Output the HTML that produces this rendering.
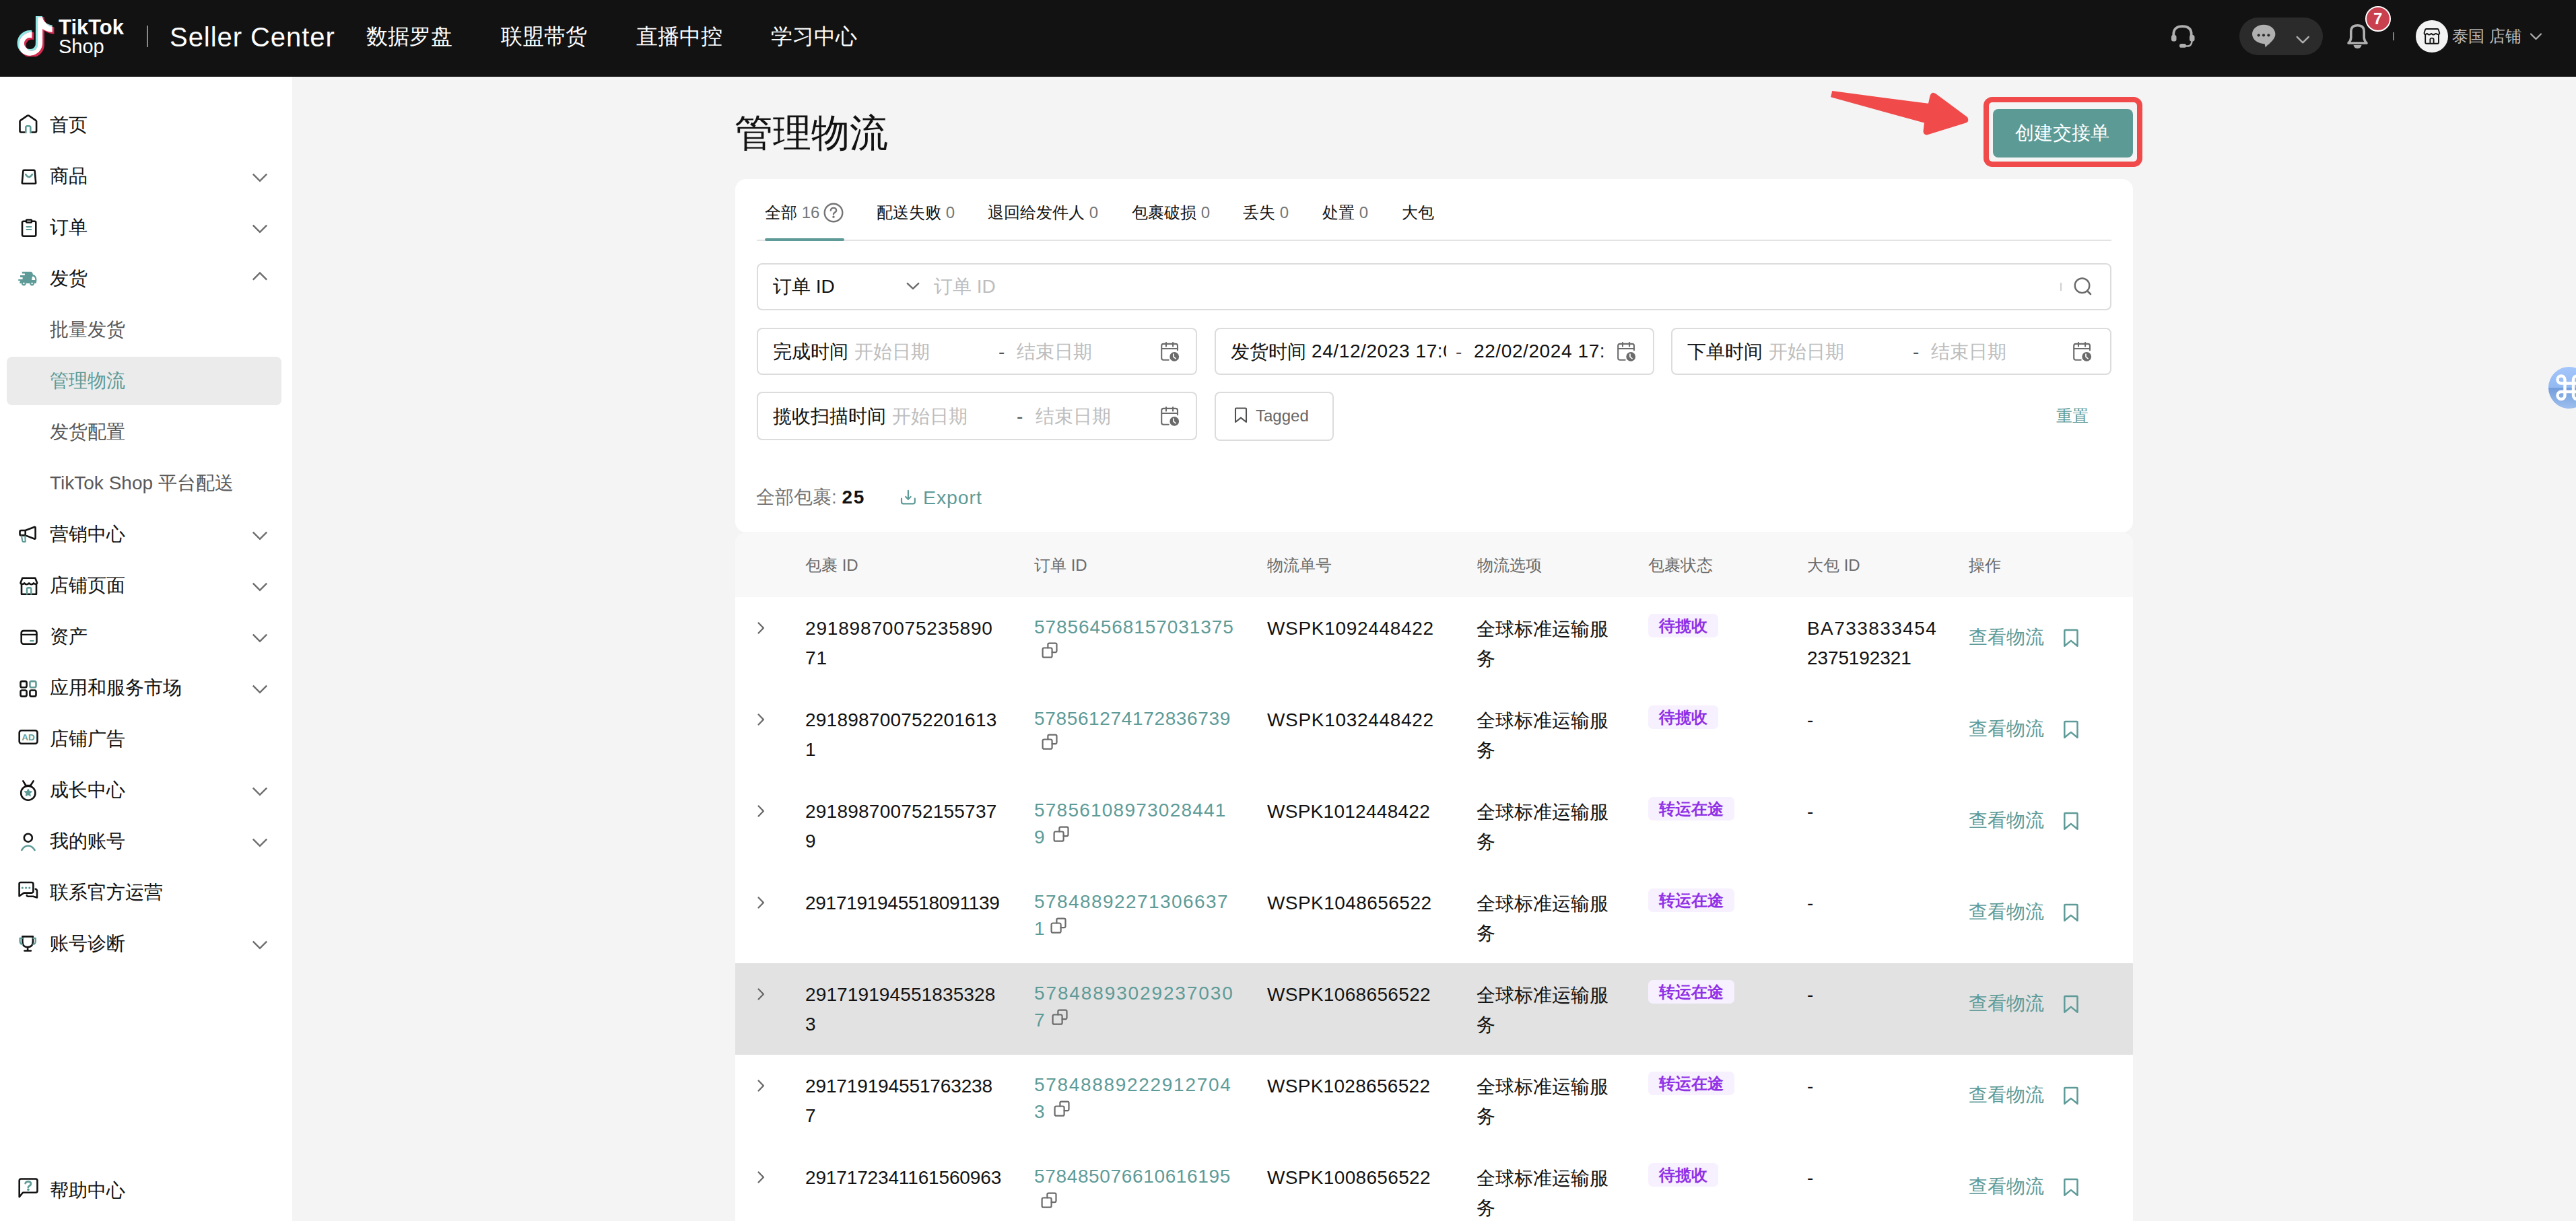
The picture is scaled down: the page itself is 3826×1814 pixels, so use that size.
<!DOCTYPE html>
<html><head><meta charset="utf-8"><style>
html,body{margin:0;padding:0;width:3826px;height:1814px;overflow:hidden;background:#f4f4f4;font-family:"Liberation Sans",sans-serif}
.t{position:absolute;white-space:nowrap}
.r{position:absolute}
</style></head><body>
<div class="r" style="left:0px;top:0px;width:3826px;height:114px;background:#121212"></div>
<div class="r" style="left:0px;top:114px;width:434px;height:1700px;background:#fff"></div>
<div class="t" style="left:87px;top:15.5px;font-size:31px;line-height:50px;color:#fff;font-weight:700;">TikTok</div>
<div class="t" style="left:87px;top:45.5px;font-size:29px;line-height:46px;color:#fff;font-weight:400;">Shop</div>
<div class="r" style="left:218px;top:38px;width:2px;height:32px;background:#8a8a8a"></div>
<div class="t" style="left:252px;top:23.0px;font-size:40px;line-height:64px;color:#fff;font-weight:400;letter-spacing:0.95px">Seller Center</div>
<div class="t" style="left:544px;top:28.0px;font-size:32.3px;line-height:52px;color:#fff;font-weight:400;">数据罗盘</div>
<div class="t" style="left:744px;top:28.0px;font-size:32.3px;line-height:52px;color:#fff;font-weight:400;">联盟带货</div>
<div class="t" style="left:945px;top:28.0px;font-size:32.3px;line-height:52px;color:#fff;font-weight:400;">直播中控</div>
<div class="t" style="left:1145px;top:28.0px;font-size:32.3px;line-height:52px;color:#fff;font-weight:400;">学习中心</div>
<div class="r" style="left:3326px;top:26px;width:124px;height:56px;background:#2b2b2b;border-radius:28px"></div>
<div class="r" style="left:3513px;top:9px;width:38px;height:38px;background:#c9404f;border:2px solid #fff;border-radius:50%;box-sizing:border-box"></div>
<div class="t" style="left:3525px;top:9.0px;font-size:24px;line-height:38px;color:#fff;font-weight:700;">7</div>
<div class="r" style="left:3554px;top:48px;width:2px;height:12px;background:#7b7f95"></div>
<div class="r" style="left:3588px;top:30px;width:48px;height:48px;background:#f2f2f2;border-radius:50%"></div>
<div class="t" style="left:3642px;top:35.0px;font-size:24px;line-height:38px;color:#bdbdbd;font-weight:400;">泰国 店铺</div>
<div class="r" style="left:10px;top:530px;width:408px;height:72px;background:#ebebeb;border-radius:8px"></div>
<div class="t" style="left:74px;top:162.7px;font-size:28px;line-height:45px;color:#121212;font-weight:400;">首页</div>
<div class="t" style="left:74px;top:238.7px;font-size:28px;line-height:45px;color:#121212;font-weight:400;">商品</div>
<div class="t" style="left:74px;top:314.7px;font-size:28px;line-height:45px;color:#121212;font-weight:400;">订单</div>
<div class="t" style="left:74px;top:390.7px;font-size:28px;line-height:45px;color:#121212;font-weight:400;">发货</div>
<div class="t" style="left:74px;top:466.7px;font-size:28px;line-height:45px;color:#595959;font-weight:400;">批量发货</div>
<div class="t" style="left:74px;top:542.7px;font-size:28px;line-height:45px;color:#5e9b98;font-weight:400;">管理物流</div>
<div class="t" style="left:74px;top:618.7px;font-size:28px;line-height:45px;color:#595959;font-weight:400;">发货配置</div>
<div class="t" style="left:74px;top:694.7px;font-size:28px;line-height:45px;color:#595959;font-weight:400;">TikTok Shop 平台配送</div>
<div class="t" style="left:74px;top:770.7px;font-size:28px;line-height:45px;color:#121212;font-weight:400;">营销中心</div>
<div class="t" style="left:74px;top:846.7px;font-size:28px;line-height:45px;color:#121212;font-weight:400;">店铺页面</div>
<div class="t" style="left:74px;top:922.7px;font-size:28px;line-height:45px;color:#121212;font-weight:400;">资产</div>
<div class="t" style="left:74px;top:998.7px;font-size:28px;line-height:45px;color:#121212;font-weight:400;">应用和服务市场</div>
<div class="t" style="left:74px;top:1074.7px;font-size:28px;line-height:45px;color:#121212;font-weight:400;">店铺广告</div>
<div class="t" style="left:74px;top:1150.7px;font-size:28px;line-height:45px;color:#121212;font-weight:400;">成长中心</div>
<div class="t" style="left:74px;top:1226.7px;font-size:28px;line-height:45px;color:#121212;font-weight:400;">我的账号</div>
<div class="t" style="left:74px;top:1302.7px;font-size:28px;line-height:45px;color:#121212;font-weight:400;">联系官方运营</div>
<div class="t" style="left:74px;top:1378.7px;font-size:28px;line-height:45px;color:#121212;font-weight:400;">账号诊断</div>
<div class="t" style="left:74px;top:1745.7px;font-size:28px;line-height:45px;color:#121212;font-weight:400;">帮助中心</div>
<div class="t" style="left:1091px;top:152.0px;font-size:57px;line-height:91px;color:#121212;font-weight:400;">管理物流</div>
<div class="r" style="left:1092px;top:266px;width:2076px;height:525px;background:#fff;border-radius:16px"></div>
<div class="t" style="left:1136px;top:296.6px;font-size:24px;line-height:38px;color:#121212;font-weight:400;">全部<span style="color:#757575"> 16</span></div>
<div class="t" style="left:1302px;top:296.6px;font-size:24px;line-height:38px;color:#121212;font-weight:400;">配送失败<span style="color:#757575"> 0</span></div>
<div class="t" style="left:1467px;top:296.6px;font-size:24px;line-height:38px;color:#121212;font-weight:400;">退回给发件人<span style="color:#757575"> 0</span></div>
<div class="t" style="left:1681px;top:296.6px;font-size:24px;line-height:38px;color:#121212;font-weight:400;">包裹破损<span style="color:#757575"> 0</span></div>
<div class="t" style="left:1846px;top:296.6px;font-size:24px;line-height:38px;color:#121212;font-weight:400;">丢失<span style="color:#757575"> 0</span></div>
<div class="t" style="left:1964px;top:296.6px;font-size:24px;line-height:38px;color:#121212;font-weight:400;">处置<span style="color:#757575"> 0</span></div>
<div class="t" style="left:2082px;top:296.6px;font-size:24px;line-height:38px;color:#121212;font-weight:400;">大包</div>
<div class="r" style="left:1124px;top:356px;width:2012px;height:2px;background:#e3e3e3"></div>
<div class="r" style="left:1136px;top:354px;width:118px;height:4px;background:#5e9b98;border-radius:2px"></div>
<div class="r" style="left:1124px;top:391px;width:2012px;height:70px;border:2px solid #dcdcdc;border-radius:8px;box-sizing:border-box"></div>
<div class="t" style="left:1148px;top:402.5px;font-size:28px;line-height:45px;color:#121212;font-weight:400;">订单 ID</div>
<div class="t" style="left:1387px;top:402.5px;font-size:28px;line-height:45px;color:#bdbdbd;font-weight:400;">订单 ID</div>
<div class="r" style="left:3060px;top:420px;width:2px;height:12px;background:#cfcfcf"></div>
<div class="r" style="left:1124px;top:487px;width:654px;height:70px;border:2px solid #dcdcdc;border-radius:8px;box-sizing:border-box"></div>
<div class="r" style="left:1804px;top:487px;width:653px;height:70px;border:2px solid #dcdcdc;border-radius:8px;box-sizing:border-box"></div>
<div class="r" style="left:2482px;top:487px;width:654px;height:70px;border:2px solid #dcdcdc;border-radius:8px;box-sizing:border-box"></div>
<div class="r" style="left:1124px;top:582px;width:654px;height:72px;border:2px solid #dcdcdc;border-radius:8px;box-sizing:border-box"></div>
<div class="r" style="left:1804px;top:582px;width:177px;height:73px;border:2px solid #dcdcdc;border-radius:8px;box-sizing:border-box"></div>
<div class="t" style="left:1148px;top:499.5px;font-size:28px;line-height:45px;color:#121212;font-weight:400;">完成时间</div>
<div class="t" style="left:1269px;top:499.5px;font-size:28px;line-height:45px;color:#bdbdbd;font-weight:400;">开始日期</div>
<div class="t" style="left:1483px;top:499.5px;font-size:28px;line-height:45px;color:#555;font-weight:400;">-</div>
<div class="t" style="left:1510px;top:499.5px;font-size:28px;line-height:45px;color:#bdbdbd;font-weight:400;">结束日期</div>
<div class="t" style="left:1828px;top:499.5px;font-size:28px;line-height:45px;color:#121212;font-weight:400;">发货时间</div>
<div class="t" style="left:1948px;top:500px;width:200px;overflow:hidden;font-size:28px;line-height:44px;color:#121212;letter-spacing:0.6px">24/12/2023 17:00</div>
<div class="t" style="left:2162px;top:499.5px;font-size:28px;line-height:45px;color:#555;font-weight:400;">-</div>
<div class="t" style="left:2189px;top:500px;width:196px;overflow:hidden;font-size:28px;line-height:44px;color:#121212;letter-spacing:0.6px">22/02/2024 17:00</div>
<div class="t" style="left:2506px;top:499.5px;font-size:28px;line-height:45px;color:#121212;font-weight:400;">下单时间</div>
<div class="t" style="left:2627px;top:499.5px;font-size:28px;line-height:45px;color:#bdbdbd;font-weight:400;">开始日期</div>
<div class="t" style="left:2841px;top:499.5px;font-size:28px;line-height:45px;color:#555;font-weight:400;">-</div>
<div class="t" style="left:2868px;top:499.5px;font-size:28px;line-height:45px;color:#bdbdbd;font-weight:400;">结束日期</div>
<div class="t" style="left:1148px;top:595.5px;font-size:28px;line-height:45px;color:#121212;font-weight:400;">揽收扫描时间</div>
<div class="t" style="left:1325px;top:595.5px;font-size:28px;line-height:45px;color:#bdbdbd;font-weight:400;">开始日期</div>
<div class="t" style="left:1510px;top:595.5px;font-size:28px;line-height:45px;color:#555;font-weight:400;">-</div>
<div class="t" style="left:1538px;top:595.5px;font-size:28px;line-height:45px;color:#bdbdbd;font-weight:400;">结束日期</div>
<div class="t" style="left:1865px;top:599.0px;font-size:24px;line-height:38px;color:#666;font-weight:400;">Tagged</div>
<div class="t" style="left:3054px;top:598.5px;font-size:24px;line-height:38px;color:#5e9b98;font-weight:400;">重置</div>
<div class="t" style="left:1123px;top:716.0px;font-size:28px;line-height:45px;color:#757575;font-weight:400;">全部包裹: <b style="color:#121212;letter-spacing:1.5px">25</b></div>
<div class="t" style="left:1371px;top:716.0px;font-size:28.5px;line-height:46px;color:#5e9b98;font-weight:500;letter-spacing:0.9px">Export</div>
<div class="r" style="left:1092px;top:792px;width:2076px;height:95px;background:#f8f8f8;border-radius:14px 14px 0 0"></div>
<div class="t" style="left:1196px;top:821.0px;font-size:24px;line-height:38px;color:#6b6b6b;font-weight:400;">包裹 ID</div>
<div class="t" style="left:1536px;top:821.0px;font-size:24px;line-height:38px;color:#6b6b6b;font-weight:400;">订单 ID</div>
<div class="t" style="left:1882px;top:821.0px;font-size:24px;line-height:38px;color:#6b6b6b;font-weight:400;">物流单号</div>
<div class="t" style="left:2194px;top:821.0px;font-size:24px;line-height:38px;color:#6b6b6b;font-weight:400;">物流选项</div>
<div class="t" style="left:2448px;top:821.0px;font-size:24px;line-height:38px;color:#6b6b6b;font-weight:400;">包裹状态</div>
<div class="t" style="left:2684px;top:821.0px;font-size:24px;line-height:38px;color:#6b6b6b;font-weight:400;">大包 ID</div>
<div class="t" style="left:2924px;top:821.0px;font-size:24px;line-height:38px;color:#6b6b6b;font-weight:400;">操作</div>
<div class="r" style="left:1092px;top:887px;width:2076px;height:136px;background:#fff"></div>
<div class="t" style="left:1196px;top:911.0px;font-size:28px;line-height:45px;color:#121212;font-weight:400;letter-spacing:0.825px">29189870075235890</div>
<div class="t" style="left:1196px;top:955.0px;font-size:28px;line-height:45px;color:#121212;font-weight:400;letter-spacing:0.825px">71</div>
<div class="t" style="left:1536px;top:909.0px;font-size:28px;line-height:45px;color:#5e9b98;font-weight:500;letter-spacing:0.906px">578564568157031375</div>
<div class="t" style="left:1882px;top:911.0px;font-size:28px;line-height:45px;color:#121212;font-weight:400;letter-spacing:0.677px">WSPK1092448422</div>
<div class="t" style="left:2193px;top:911.5px;font-size:28px;line-height:45px;color:#121212;font-weight:400;">全球标准运输服</div>
<div class="t" style="left:2193px;top:955.5px;font-size:28px;line-height:45px;color:#121212;font-weight:400;">务</div>
<div class="r" style="left:2448px;top:912px;width:104px;height:35px;background:#f7f0fe;border-radius:7px"></div>
<div class="t" style="left:2464px;top:910.5px;font-size:24px;line-height:38px;color:#9030e6;font-weight:700;">待揽收</div>
<div class="t" style="left:2684px;top:911.0px;font-size:28px;line-height:45px;color:#121212;font-weight:400;letter-spacing:1.440px">BA733833454</div>
<div class="t" style="left:2684px;top:955.0px;font-size:28px;line-height:45px;color:#121212;font-weight:400;letter-spacing:-0.111px">2375192321</div>
<div class="t" style="left:2924px;top:923.5px;font-size:28px;line-height:45px;color:#5e9b98;font-weight:400;">查看物流</div>
<div class="r" style="left:1092px;top:1023px;width:2076px;height:136px;background:#fff"></div>
<div class="t" style="left:1196px;top:1047.0px;font-size:28px;line-height:45px;color:#121212;font-weight:400;letter-spacing:0.235px">291898700752201613</div>
<div class="t" style="left:1196px;top:1091.0px;font-size:28px;line-height:45px;color:#121212;font-weight:400;letter-spacing:0.235px">1</div>
<div class="t" style="left:1536px;top:1045.0px;font-size:28px;line-height:45px;color:#5e9b98;font-weight:500;letter-spacing:0.647px">578561274172836739</div>
<div class="t" style="left:1882px;top:1047.0px;font-size:28px;line-height:45px;color:#121212;font-weight:400;letter-spacing:0.677px">WSPK1032448422</div>
<div class="t" style="left:2193px;top:1047.5px;font-size:28px;line-height:45px;color:#121212;font-weight:400;">全球标准运输服</div>
<div class="t" style="left:2193px;top:1091.5px;font-size:28px;line-height:45px;color:#121212;font-weight:400;">务</div>
<div class="r" style="left:2448px;top:1048px;width:104px;height:35px;background:#f7f0fe;border-radius:7px"></div>
<div class="t" style="left:2464px;top:1046.5px;font-size:24px;line-height:38px;color:#9030e6;font-weight:700;">待揽收</div>
<div class="t" style="left:2684px;top:1047.0px;font-size:28px;line-height:45px;color:#121212;font-weight:400;letter-spacing:0.700px">-</div>
<div class="t" style="left:2924px;top:1059.5px;font-size:28px;line-height:45px;color:#5e9b98;font-weight:400;">查看物流</div>
<div class="r" style="left:1092px;top:1159px;width:2076px;height:136px;background:#fff"></div>
<div class="t" style="left:1196px;top:1183.0px;font-size:28px;line-height:45px;color:#121212;font-weight:400;letter-spacing:0.235px">291898700752155737</div>
<div class="t" style="left:1196px;top:1227.0px;font-size:28px;line-height:45px;color:#121212;font-weight:400;letter-spacing:0.235px">9</div>
<div class="t" style="left:1536px;top:1181.0px;font-size:28px;line-height:45px;color:#5e9b98;font-weight:500;letter-spacing:1.231px">57856108973028441</div>
<div class="t" style="left:1536px;top:1221.0px;font-size:28px;line-height:45px;color:#5e9b98;font-weight:500;letter-spacing:1.231px">9</div>
<div class="t" style="left:1882px;top:1183.0px;font-size:28px;line-height:45px;color:#121212;font-weight:400;letter-spacing:0.277px">WSPK1012448422</div>
<div class="t" style="left:2193px;top:1183.5px;font-size:28px;line-height:45px;color:#121212;font-weight:400;">全球标准运输服</div>
<div class="t" style="left:2193px;top:1227.5px;font-size:28px;line-height:45px;color:#121212;font-weight:400;">务</div>
<div class="r" style="left:2448px;top:1184px;width:128px;height:35px;background:#f7f0fe;border-radius:7px"></div>
<div class="t" style="left:2464px;top:1182.5px;font-size:24px;line-height:38px;color:#9030e6;font-weight:700;">转运在途</div>
<div class="t" style="left:2684px;top:1183.0px;font-size:28px;line-height:45px;color:#121212;font-weight:400;letter-spacing:0.700px">-</div>
<div class="t" style="left:2924px;top:1195.5px;font-size:28px;line-height:45px;color:#5e9b98;font-weight:400;">查看物流</div>
<div class="r" style="left:1092px;top:1295px;width:2076px;height:136px;background:#fff"></div>
<div class="t" style="left:1196px;top:1319.0px;font-size:28px;line-height:45px;color:#121212;font-weight:400;letter-spacing:-0.278px">2917191945518091139</div>
<div class="t" style="left:1536px;top:1317.0px;font-size:28px;line-height:45px;color:#5e9b98;font-weight:500;letter-spacing:1.425px">57848892271306637</div>
<div class="t" style="left:1536px;top:1357.0px;font-size:28px;line-height:45px;color:#5e9b98;font-weight:500;letter-spacing:1.425px">1</div>
<div class="t" style="left:1882px;top:1319.0px;font-size:28px;line-height:45px;color:#121212;font-weight:400;letter-spacing:0.446px">WSPK1048656522</div>
<div class="t" style="left:2193px;top:1319.5px;font-size:28px;line-height:45px;color:#121212;font-weight:400;">全球标准运输服</div>
<div class="t" style="left:2193px;top:1363.5px;font-size:28px;line-height:45px;color:#121212;font-weight:400;">务</div>
<div class="r" style="left:2448px;top:1320px;width:128px;height:35px;background:#f7f0fe;border-radius:7px"></div>
<div class="t" style="left:2464px;top:1318.5px;font-size:24px;line-height:38px;color:#9030e6;font-weight:700;">转运在途</div>
<div class="t" style="left:2684px;top:1319.0px;font-size:28px;line-height:45px;color:#121212;font-weight:400;letter-spacing:0.700px">-</div>
<div class="t" style="left:2924px;top:1331.5px;font-size:28px;line-height:45px;color:#5e9b98;font-weight:400;">查看物流</div>
<div class="r" style="left:1092px;top:1431px;width:2076px;height:136px;background:#e2e2e2"></div>
<div class="t" style="left:1196px;top:1455.0px;font-size:28px;line-height:45px;color:#121212;font-weight:400;letter-spacing:0.118px">291719194551835328</div>
<div class="t" style="left:1196px;top:1499.0px;font-size:28px;line-height:45px;color:#121212;font-weight:400;letter-spacing:0.118px">3</div>
<div class="t" style="left:1536px;top:1453.0px;font-size:28px;line-height:45px;color:#5e9b98;font-weight:500;letter-spacing:1.875px">57848893029237030</div>
<div class="t" style="left:1536px;top:1493.0px;font-size:28px;line-height:45px;color:#5e9b98;font-weight:500;letter-spacing:1.875px">7</div>
<div class="t" style="left:1882px;top:1455.0px;font-size:28px;line-height:45px;color:#121212;font-weight:400;letter-spacing:0.346px">WSPK1068656522</div>
<div class="t" style="left:2193px;top:1455.5px;font-size:28px;line-height:45px;color:#121212;font-weight:400;">全球标准运输服</div>
<div class="t" style="left:2193px;top:1499.5px;font-size:28px;line-height:45px;color:#121212;font-weight:400;">务</div>
<div class="r" style="left:2448px;top:1456px;width:128px;height:35px;background:#f7f0fe;border-radius:7px"></div>
<div class="t" style="left:2464px;top:1454.5px;font-size:24px;line-height:38px;color:#9030e6;font-weight:700;">转运在途</div>
<div class="t" style="left:2684px;top:1455.0px;font-size:28px;line-height:45px;color:#121212;font-weight:400;letter-spacing:0.700px">-</div>
<div class="t" style="left:2924px;top:1467.5px;font-size:28px;line-height:45px;color:#5e9b98;font-weight:400;">查看物流</div>
<div class="r" style="left:1092px;top:1567px;width:2076px;height:136px;background:#fff"></div>
<div class="t" style="left:1196px;top:1591.0px;font-size:28px;line-height:45px;color:#121212;font-weight:400;letter-spacing:-0.129px">291719194551763238</div>
<div class="t" style="left:1196px;top:1635.0px;font-size:28px;line-height:45px;color:#121212;font-weight:400;letter-spacing:-0.129px">7</div>
<div class="t" style="left:1536px;top:1589.0px;font-size:28px;line-height:45px;color:#5e9b98;font-weight:500;letter-spacing:1.688px">57848889222912704</div>
<div class="t" style="left:1536px;top:1629.0px;font-size:28px;line-height:45px;color:#5e9b98;font-weight:500;letter-spacing:1.688px">3</div>
<div class="t" style="left:1882px;top:1591.0px;font-size:28px;line-height:45px;color:#121212;font-weight:400;letter-spacing:0.292px">WSPK1028656522</div>
<div class="t" style="left:2193px;top:1591.5px;font-size:28px;line-height:45px;color:#121212;font-weight:400;">全球标准运输服</div>
<div class="t" style="left:2193px;top:1635.5px;font-size:28px;line-height:45px;color:#121212;font-weight:400;">务</div>
<div class="r" style="left:2448px;top:1592px;width:128px;height:35px;background:#f7f0fe;border-radius:7px"></div>
<div class="t" style="left:2464px;top:1590.5px;font-size:24px;line-height:38px;color:#9030e6;font-weight:700;">转运在途</div>
<div class="t" style="left:2684px;top:1591.0px;font-size:28px;line-height:45px;color:#121212;font-weight:400;letter-spacing:0.700px">-</div>
<div class="t" style="left:2924px;top:1603.5px;font-size:28px;line-height:45px;color:#5e9b98;font-weight:400;">查看物流</div>
<div class="r" style="left:1092px;top:1703px;width:2076px;height:136px;background:#fff"></div>
<div class="t" style="left:1196px;top:1727.0px;font-size:28px;line-height:45px;color:#121212;font-weight:400;letter-spacing:-0.144px">2917172341161560963</div>
<div class="t" style="left:1536px;top:1725.0px;font-size:28px;line-height:45px;color:#5e9b98;font-weight:500;letter-spacing:0.647px">578485076610616195</div>
<div class="t" style="left:1882px;top:1727.0px;font-size:28px;line-height:45px;color:#121212;font-weight:400;letter-spacing:0.338px">WSPK1008656522</div>
<div class="t" style="left:2193px;top:1727.5px;font-size:28px;line-height:45px;color:#121212;font-weight:400;">全球标准运输服</div>
<div class="t" style="left:2193px;top:1771.5px;font-size:28px;line-height:45px;color:#121212;font-weight:400;">务</div>
<div class="r" style="left:2448px;top:1728px;width:104px;height:35px;background:#f7f0fe;border-radius:7px"></div>
<div class="t" style="left:2464px;top:1726.5px;font-size:24px;line-height:38px;color:#9030e6;font-weight:700;">待揽收</div>
<div class="t" style="left:2684px;top:1727.0px;font-size:28px;line-height:45px;color:#121212;font-weight:400;letter-spacing:0.700px">-</div>
<div class="t" style="left:2924px;top:1739.5px;font-size:28px;line-height:45px;color:#5e9b98;font-weight:400;">查看物流</div>
<svg class="r" style="left:23.4px;top:23.9px;" width="60" height="60" viewBox="0 0 24 24" fill="none"><defs><clipPath id="ttc"><path d="M12.525.02c1.31-.02 2.61-.01 3.91-.02.08 1.53.63 3.09 1.75 4.17 1.12 1.11 2.7 1.62 4.24 1.79v4.03c-1.44-.05-2.89-.35-4.2-.97-.57-.26-1.1-.59-1.62-.93-.01 2.92.01 5.84-.02 8.75-.08 1.4-.54 2.79-1.35 3.94-1.31 1.92-3.58 3.17-5.91 3.21-1.43.08-2.86-.31-4.08-1.03-2.02-1.19-3.44-3.37-3.65-5.71-.02-.5-.03-1-.01-1.49.18-1.9 1.12-3.72 2.58-4.96 1.66-1.44 3.98-2.13 6.15-1.72.02 1.48-.04 2.96-.04 4.44-.99-.32-2.15-.23-3.02.37-.63.41-1.11 1.04-1.36 1.75-.21.51-.15 1.07-.14 1.61.24 1.64 1.82 3.02 3.5 2.87 1.12-.01 2.19-.66 2.77-1.61.19-.33.4-.67.41-1.06.1-1.79.06-3.57.07-5.36.01-4.03-.01-8.05.02-12.07z" transform="translate(-0.54,-0.54)"/></clipPath></defs><path d="M12.525.02c1.31-.02 2.61-.01 3.91-.02.08 1.53.63 3.09 1.75 4.17 1.12 1.11 2.7 1.62 4.24 1.79v4.03c-1.44-.05-2.89-.35-4.2-.97-.57-.26-1.1-.59-1.62-.93-.01 2.92.01 5.84-.02 8.75-.08 1.4-.54 2.79-1.35 3.94-1.31 1.92-3.58 3.17-5.91 3.21-1.43.08-2.86-.31-4.08-1.03-2.02-1.19-3.44-3.37-3.65-5.71-.02-.5-.03-1-.01-1.49.18-1.9 1.12-3.72 2.58-4.96 1.66-1.44 3.98-2.13 6.15-1.72.02 1.48-.04 2.96-.04 4.44-.99-.32-2.15-.23-3.02.37-.63.41-1.11 1.04-1.36 1.75-.21.51-.15 1.07-.14 1.61.24 1.64 1.82 3.02 3.5 2.87 1.12-.01 2.19-.66 2.77-1.61.19-.33.4-.67.41-1.06.1-1.79.06-3.57.07-5.36.01-4.03-.01-8.05.02-12.07z" fill="#8ee8e6" transform="translate(-0.54,-0.54)"/><path d="M12.525.02c1.31-.02 2.61-.01 3.91-.02.08 1.53.63 3.09 1.75 4.17 1.12 1.11 2.7 1.62 4.24 1.79v4.03c-1.44-.05-2.89-.35-4.2-.97-.57-.26-1.1-.59-1.62-.93-.01 2.92.01 5.84-.02 8.75-.08 1.4-.54 2.79-1.35 3.94-1.31 1.92-3.58 3.17-5.91 3.21-1.43.08-2.86-.31-4.08-1.03-2.02-1.19-3.44-3.37-3.65-5.71-.02-.5-.03-1-.01-1.49.18-1.9 1.12-3.72 2.58-4.96 1.66-1.44 3.98-2.13 6.15-1.72.02 1.48-.04 2.96-.04 4.44-.99-.32-2.15-.23-3.02.37-.63.41-1.11 1.04-1.36 1.75-.21.51-.15 1.07-.14 1.61.24 1.64 1.82 3.02 3.5 2.87 1.12-.01 2.19-.66 2.77-1.61.19-.33.4-.67.41-1.06.1-1.79.06-3.57.07-5.36.01-4.03-.01-8.05.02-12.07z" fill="#d42b50" transform="translate(0.54,0.54)"/><g clip-path="url(#ttc)"><path d="M12.525.02c1.31-.02 2.61-.01 3.91-.02.08 1.53.63 3.09 1.75 4.17 1.12 1.11 2.7 1.62 4.24 1.79v4.03c-1.44-.05-2.89-.35-4.2-.97-.57-.26-1.1-.59-1.62-.93-.01 2.92.01 5.84-.02 8.75-.08 1.4-.54 2.79-1.35 3.94-1.31 1.92-3.58 3.17-5.91 3.21-1.43.08-2.86-.31-4.08-1.03-2.02-1.19-3.44-3.37-3.65-5.71-.02-.5-.03-1-.01-1.49.18-1.9 1.12-3.72 2.58-4.96 1.66-1.44 3.98-2.13 6.15-1.72.02 1.48-.04 2.96-.04 4.44-.99-.32-2.15-.23-3.02.37-.63.41-1.11 1.04-1.36 1.75-.21.51-.15 1.07-.14 1.61.24 1.64 1.82 3.02 3.5 2.87 1.12-.01 2.19-.66 2.77-1.61.19-.33.4-.67.41-1.06.1-1.79.06-3.57.07-5.36.01-4.03-.01-8.05.02-12.07z" fill="#fff" transform="translate(0.54,0.54)"/></g></svg>
<svg class="r" style="left:3220px;top:30px;" width="45" height="45" viewBox="0 0 45 45" fill="none"><path d="M8.3 24 V21 Q8.3 9.2 21.5 9.2 Q34.7 9.2 34.7 21 V24" stroke="#b0b0b0" stroke-width="3.8" stroke-linecap="round" stroke-linejoin="round" /><rect x="5" y="22" width="7.5" height="9.5" rx="3" fill="#b0b0b0"/><rect x="32" y="22" width="7.5" height="9.5" rx="3" fill="#b0b0b0"/><path d="M35.5 31 Q35 38 30 38.5 H24" stroke="#b0b0b0" stroke-width="2.6" stroke-linecap="round" stroke-linejoin="round" /><rect x="17" y="35" width="10" height="5.8" rx="2.9" fill="#b0b0b0"/></svg>
<svg class="r" style="left:3340px;top:30px;" width="45" height="45" viewBox="0 0 45 45" fill="none"><path d="M22.2 6.7 C31.8 6.7 39.4 12.8 39.4 20.6 C39.4 26 36 30 30.5 35 C29 36.3 27 37.5 24.7 40.5 L23.6 35.2 C13.6 35 5 29 5 20.6 C5 12.8 12.7 6.7 22.2 6.7 Z" fill="#b0b0b0" /><circle cx="14.7" cy="22.3" r="2.1" fill="#2c2c2c"/><circle cx="22" cy="22.3" r="2.1" fill="#2c2c2c"/><circle cx="29.4" cy="22.3" r="2.1" fill="#2c2c2c"/></svg>
<svg class="r" style="left:3405px;top:48px;" width="30" height="22" viewBox="0 0 30 22" fill="none"><path d="M6.7 6.8 L15.25 15.3 L23.8 6.8" stroke="#b0b0b0" stroke-width="2.4" stroke-linecap="round" stroke-linejoin="round" /></svg>
<svg class="r" style="left:3480px;top:30px;" width="45" height="45" viewBox="0 0 45 45" fill="none"><path d="M8 34 Q11.5 30.5 11.8 26 V17 Q11.8 7.8 21.5 7.8 Q31.2 7.8 31.2 17 V26 Q31.5 30.5 35 34 Z" stroke="#b0b0b0" stroke-width="3.6" stroke-linecap="round" stroke-linejoin="round" /><path d="M15.5 37 H27.5 Q26.5 42 21.5 42 Q16.5 42 15.5 37 Z" fill="#b0b0b0" /></svg>
<svg class="r" style="left:3592px;top:34px;" width="40" height="40" viewBox="0 0 40 40" fill="none"><path d="M11.4 9 H28.4 Q29.4 9 29.7 10 L31.2 14.8 Q31.6 16.6 29.8 17 Q28 17.3 26.8 16.2 Q25.6 15.6 24.4 16.6 Q23 17.8 21.6 17.5 Q20.6 17.3 19.8 16.3 Q19 15.6 18 16.6 Q16.8 17.8 15.4 17.5 Q14.3 17.2 13.6 16.3 Q12.6 15.6 11.2 16.8 Q9.4 17.6 8.7 16 Q8.4 15.3 8.7 14.4 L10.1 10 Q10.4 9 11.4 9 Z M10.2 17.4 V29 Q10.2 30.8 12 30.8 H28.2 Q30 30.8 30 29 V17.4 M17.4 30.8 V24.6 Q17.4 22.6 20 22.6 Q22.6 22.6 22.6 24.6 V30.8" stroke="#111" stroke-width="1.9" stroke-linecap="round" stroke-linejoin="round" /></svg>
<svg class="r" style="left:3752px;top:45px;" width="28" height="20" viewBox="0 0 28 20" fill="none"><path d="M7 5.5 L14.5 13 L22 5.5" stroke="#b0b0b0" stroke-width="2.2" stroke-linecap="round" stroke-linejoin="round" /></svg>
<svg class="r" style="left:22px;top:165px;" width="40" height="40" viewBox="0 0 40 40" fill="none"><path d="M14.5 31.5 H9.5 Q7.5 31.5 7.5 29.5 V15.5 Q7.5 14.5 8.4 13.9 L18.6 6.9 Q19.8 6.1 21 6.9 L31.2 13.9 Q32.1 14.5 32.1 15.5 V29.5 Q32.1 31.5 30.1 31.5 H25.2" stroke="#121212" stroke-width="2.6" stroke-linecap="round" stroke-linejoin="round" /><path d="M16.3 32 V24.5 Q16.3 22.3 18.5 22.3 H21.1 Q23.3 22.3 23.3 24.5 V32" stroke="#5e9b98" stroke-width="2.6" stroke-linecap="round" stroke-linejoin="round" /></svg>
<svg class="r" style="left:22px;top:242px;" width="40" height="40" viewBox="0 0 40 40" fill="none"><path d="M13.5 10.8 H28.5 Q29.5 10.8 29.6 11.8 L31.2 29.5 Q31.3 30.8 30 30.8 H12 Q10.7 30.8 10.8 29.5 L12.4 11.8 Q12.5 10.8 13.5 10.8 Z" stroke="#121212" stroke-width="2.6" stroke-linecap="round" stroke-linejoin="round" /><path d="M16.2 17.2 Q21 24.5 25.8 17.2" stroke="#5e9b98" stroke-width="2.6" stroke-linecap="round" stroke-linejoin="round" /></svg>
<svg class="r" style="left:22px;top:318px;" width="40" height="40" viewBox="0 0 40 40" fill="none"><path d="M16.5 10.8 H13 Q11 10.8 11 12.8 V30.8 Q11 32.8 13 32.8 H29.3 Q31.3 32.8 31.3 30.8 V12.8 Q31.3 10.8 29.3 10.8 H25.8" stroke="#121212" stroke-width="2.6" stroke-linecap="round" stroke-linejoin="round" /><rect x="17" y="8.6" width="8" height="4" rx="1" stroke="#121212" stroke-width="2.5"/><path d="M16.8 19 H25.2 M16.8 23 H25.2" stroke="#5e9b98" stroke-width="1.8" stroke-linejoin="round" stroke-linecap="butt"/></svg>
<svg class="r" style="left:22px;top:394px;" width="40" height="40" viewBox="0 0 40 40" fill="none"><path d="M10.8 9.8 H24 Q25.6 9.8 26.1 11.3 L27 14 Q30.3 14.4 31.6 17.5 Q32.8 20 32.4 23 L31.7 27 H28.9 A3.4 3.4 0 0 0 22.3 27 H16.8 A3.4 3.4 0 0 0 10.1 27 H7 L7.9 23 H5.2 V21 H11.6 V17.9 H8 V14.9 H14.9 V12.6 H10.8 Z M25.9 16.7 L25.2 22 H30.2 Q30.5 18 27.5 16.7 Z" fill="#5e9b98" fill-rule="evenodd"/><circle cx="13.4" cy="27" r="2.3" stroke="#5e9b98" stroke-width="2.2"/><circle cx="25.6" cy="27" r="2.3" stroke="#5e9b98" stroke-width="2.2"/></svg>
<svg class="r" style="left:22px;top:774px;" width="40" height="40" viewBox="0 0 40 40" fill="none"><path d="M9.5 14 H15.7 V21.4 H9.5 Q7.5 21.4 7.5 19.4 V16 Q7.5 14 9.5 14 Z M15.7 14 L29 9 Q30.6 8.6 30.6 10.2 V25.3 Q30.6 26.9 29 26.5 L15.7 21.4" stroke="#121212" stroke-width="2.6" stroke-linecap="round" stroke-linejoin="round" /><path d="M9.9 22.5 L11.4 30 Q11.7 31 12.7 31 H14.8 Q15.8 31 15.7 30 L15.3 22.5" stroke="#5e9b98" stroke-width="2.2" stroke-linecap="round" stroke-linejoin="round" /></svg>
<svg class="r" style="left:22px;top:850px;" width="40" height="40" viewBox="0 0 40 40" fill="none"><path d="M11.3 8.7 H30.3 L33 15.8 Q33.2 17.6 31.2 17.8 Q29 18 28 16.4 Q26.5 18.2 24.6 18.2 Q22.6 18.2 21.1 16.4 Q19.6 18.2 17.6 18.2 Q15.6 18.2 14.2 16.4 Q13 18 11 17.8 Q8.4 17.6 8.6 15.8 Z M10 18.5 V32.8 H32 V18.5" stroke="#121212" stroke-width="2.6" stroke-linecap="round" stroke-linejoin="round" /><path d="M18 32.5 V25.3 Q18 23.3 20 23.3 H22.3 Q24.3 23.3 24.3 25.3 V32.5" stroke="#5e9b98" stroke-width="2.4" stroke-linecap="round" stroke-linejoin="round" /></svg>
<svg class="r" style="left:22px;top:926px;" width="40" height="40" viewBox="0 0 40 40" fill="none"><rect x="9.7" y="11.1" width="22.8" height="19.6" rx="3.2" stroke="#121212" stroke-width="2.6"/><path d="M9.7 16.9 H32.5" stroke="#121212" stroke-width="2.2" stroke-linecap="round" stroke-linejoin="round" /><path d="M23.2 26.1 H27.5" stroke="#5e9b98" stroke-width="2.4" stroke-linecap="round" stroke-linejoin="round" /></svg>
<svg class="r" style="left:22px;top:1001px;" width="40" height="40" viewBox="0 0 40 40" fill="none"><rect x="8.5" y="11.1" width="9.1" height="9.1" rx="2.3" stroke="#121212" stroke-width="2.6"/><rect x="22.4" y="11.1" width="9.1" height="9.1" rx="2.3" stroke="#5e9b98" stroke-width="2.6"/><rect x="8.5" y="24.5" width="9.1" height="9.1" rx="2.3" stroke="#121212" stroke-width="2.6"/><rect x="22.4" y="24.5" width="9.1" height="9.1" rx="2.3" stroke="#121212" stroke-width="2.6"/></svg>
<svg class="r" style="left:22px;top:1077px;" width="40" height="40" viewBox="0 0 40 40" fill="none"><rect x="6.7" y="8.2" width="26.8" height="19.5" rx="3.2" stroke="#121212" stroke-width="2.6"/><text x="20.1" y="23" text-anchor="middle" font-family="Liberation Sans" font-weight="700" font-size="13.5" fill="#5e9b98">AD</text></svg>
<svg class="r" style="left:22px;top:1153px;" width="40" height="40" viewBox="0 0 40 40" fill="none"><path d="M12.3 7.4 L16.4 14 H23.4 L27.6 7.4" stroke="#121212" stroke-width="2.6" stroke-linecap="round" stroke-linejoin="round" /><circle cx="19.8" cy="25.2" r="10.6" stroke="#121212" stroke-width="2.6"/><path d="M19.8 19 L21.5 22.6 L25.6 23 L22.5 25.7 L23.4 29.8 L19.8 27.7 L16.2 29.8 L17.1 25.7 L14 23 L18.1 22.6 Z" fill="#5e9b98" stroke="#5e9b98" stroke-width="1" stroke-linejoin="round"/></svg>
<svg class="r" style="left:22px;top:1229px;" width="40" height="40" viewBox="0 0 40 40" fill="none"><circle cx="19.8" cy="15.7" r="6" stroke="#121212" stroke-width="2.6"/><path d="M10.2 34 Q14 27.5 19.8 27.5 Q25.6 27.5 29.6 34" stroke="#5e9b98" stroke-width="2.6" stroke-linecap="round" stroke-linejoin="round" /></svg>
<svg class="r" style="left:22px;top:1305px;" width="40" height="40" viewBox="0 0 40 40" fill="none"><path d="M8.5 6 H24.9 Q27.4 6 27.4 8.5 V19.1 Q27.4 21.6 24.9 21.6 H13.5 L6.6 26.3 V8 Q6.6 6 8.5 6 Z" stroke="#121212" stroke-width="2.6" stroke-linecap="round" stroke-linejoin="round" /><path d="M30.7 15.7 Q33 16.1 33 19 V28.5 L27.3 26.8 H20 Q17.8 26.8 17.8 25" stroke="#121212" stroke-width="2.5" stroke-linecap="round" stroke-linejoin="round" /><circle cx="11.3" cy="14.1" r="1.6" fill="#5e9b98"/><circle cx="16.6" cy="14.1" r="1.6" fill="#5e9b98"/><circle cx="21.8" cy="14.1" r="1.6" fill="#5e9b98"/></svg>
<svg class="r" style="left:22px;top:1381px;" width="40" height="40" viewBox="0 0 40 40" fill="none"><path d="M11.4 10.4 H26.9 V18 Q26.9 26.1 19.1 26.1 Q11.4 26.1 11.4 18 Z M19.1 26.1 V31.5 M14.4 31.5 H23.9" stroke="#121212" stroke-width="2.6" stroke-linecap="round" stroke-linejoin="round" /><path d="M11 12.8 H7.6 V17 Q7.6 21.5 11 21.8 M27.3 12.8 H30.8 V17 Q30.8 21.5 27.3 21.8" stroke="#5e9b98" stroke-width="2.3" stroke-linecap="round" stroke-linejoin="round" /></svg>
<svg class="r" style="left:22px;top:1745px;" width="40" height="40" viewBox="0 0 40 40" fill="none"><path d="M9.3 6.5 H31 Q33.5 6.5 33.5 9 V24.2 Q33.5 26.7 31 26.7 H12 L6.7 33.2 V9 Q6.7 6.5 9.3 6.5 Z" stroke="#121212" stroke-width="2.6" stroke-linecap="round" stroke-linejoin="round" /><path d="M15.6 13.1 Q16.3 10.3 19.9 10.3 Q23.9 10.3 23.9 13.6 Q23.9 15.8 21.5 17 Q19.8 17.8 19.8 19" stroke="#5e9b98" stroke-width="2.7" stroke-linecap="round" stroke-linejoin="round" /><circle cx="19.9" cy="22.4" r="1.8" fill="#5e9b98"/></svg>
<svg class="r" style="left:371px;top:249px;" width="30" height="28" viewBox="0 0 30 28" fill="none"><path d="M4.8 9.6 L15 19.8 L25.2 9.6" stroke="#6e6e6e" stroke-width="2.5" stroke-linecap="butt" stroke-linejoin="miter"/></svg>
<svg class="r" style="left:371px;top:325px;" width="30" height="28" viewBox="0 0 30 28" fill="none"><path d="M4.8 9.6 L15 19.8 L25.2 9.6" stroke="#6e6e6e" stroke-width="2.5" stroke-linecap="butt" stroke-linejoin="miter"/></svg>
<svg class="r" style="left:371px;top:781px;" width="30" height="28" viewBox="0 0 30 28" fill="none"><path d="M4.8 9.6 L15 19.8 L25.2 9.6" stroke="#6e6e6e" stroke-width="2.5" stroke-linecap="butt" stroke-linejoin="miter"/></svg>
<svg class="r" style="left:371px;top:857px;" width="30" height="28" viewBox="0 0 30 28" fill="none"><path d="M4.8 9.6 L15 19.8 L25.2 9.6" stroke="#6e6e6e" stroke-width="2.5" stroke-linecap="butt" stroke-linejoin="miter"/></svg>
<svg class="r" style="left:371px;top:933px;" width="30" height="28" viewBox="0 0 30 28" fill="none"><path d="M4.8 9.6 L15 19.8 L25.2 9.6" stroke="#6e6e6e" stroke-width="2.5" stroke-linecap="butt" stroke-linejoin="miter"/></svg>
<svg class="r" style="left:371px;top:1009px;" width="30" height="28" viewBox="0 0 30 28" fill="none"><path d="M4.8 9.6 L15 19.8 L25.2 9.6" stroke="#6e6e6e" stroke-width="2.5" stroke-linecap="butt" stroke-linejoin="miter"/></svg>
<svg class="r" style="left:371px;top:1161px;" width="30" height="28" viewBox="0 0 30 28" fill="none"><path d="M4.8 9.6 L15 19.8 L25.2 9.6" stroke="#6e6e6e" stroke-width="2.5" stroke-linecap="butt" stroke-linejoin="miter"/></svg>
<svg class="r" style="left:371px;top:1237px;" width="30" height="28" viewBox="0 0 30 28" fill="none"><path d="M4.8 9.6 L15 19.8 L25.2 9.6" stroke="#6e6e6e" stroke-width="2.5" stroke-linecap="butt" stroke-linejoin="miter"/></svg>
<svg class="r" style="left:371px;top:1389px;" width="30" height="28" viewBox="0 0 30 28" fill="none"><path d="M4.8 9.6 L15 19.8 L25.2 9.6" stroke="#6e6e6e" stroke-width="2.5" stroke-linecap="butt" stroke-linejoin="miter"/></svg>
<svg class="r" style="left:371px;top:397px;" width="30" height="28" viewBox="0 0 30 28" fill="none"><path d="M4.8 18.6 L15 8.4 L25.2 18.6" stroke="#6e6e6e" stroke-width="2.5" stroke-linecap="butt" stroke-linejoin="miter"/></svg>
<svg class="r" style="left:1222px;top:300px;" width="32" height="32" viewBox="0 0 32 32" fill="none"><circle cx="16" cy="16" r="13.3" stroke="#757575" stroke-width="2.4"/><path d="M11.8 12.6 Q12.2 8.9 16 8.9 Q20.1 8.9 20.1 12.5 Q20.1 14.6 17.6 15.8 Q16 16.6 16 18.3" stroke="#757575" stroke-width="2.4" stroke-linecap="round" stroke-linejoin="round" /><circle cx="16" cy="22.2" r="1.7" fill="#757575"/></svg>
<svg class="r" style="left:1335px;top:405px;" width="40" height="40" viewBox="0 0 40 40" fill="none"><path d="M12.8 16.1 L21 23.9 L29.2 16.1" stroke="#6b6b6b" stroke-width="2.4" stroke-linecap="round" stroke-linejoin="round" /></svg>
<svg class="r" style="left:3070px;top:405px;" width="45" height="40" viewBox="0 0 45 40" fill="none"><circle cx="22.5" cy="19.3" r="10.8" stroke="#6b6b6b" stroke-width="2.4"/><path d="M30.4 27.5 L35 32" stroke="#6b6b6b" stroke-width="2.6" stroke-linecap="round" stroke-linejoin="round" /></svg>
<svg class="r" style="left:1711px;top:501px;" width="50" height="45" viewBox="0 0 50 45" fill="none"><path d="M24.7 33.7 H17 Q14.2 33.7 14.2 31 V12.7 Q14.2 9.9 17 9.9 H35.2 Q38 9.9 38 12.7 V19.3 M14.2 17 H38 M21 8.1 V13.6 M31.1 8.1 V13.6" stroke="#6b6b6b" stroke-width="2.1" stroke-linecap="round" stroke-linejoin="round" /><circle cx="33.2" cy="28.9" r="6.9" fill="#6b6b6b"/><path d="M32 25.2 V29.1 L35 31.6" stroke="#fff" stroke-width="1.7" stroke-linecap="round" stroke-linejoin="round" /></svg>
<svg class="r" style="left:2389px;top:501px;" width="50" height="45" viewBox="0 0 50 45" fill="none"><path d="M24.7 33.7 H17 Q14.2 33.7 14.2 31 V12.7 Q14.2 9.9 17 9.9 H35.2 Q38 9.9 38 12.7 V19.3 M14.2 17 H38 M21 8.1 V13.6 M31.1 8.1 V13.6" stroke="#6b6b6b" stroke-width="2.1" stroke-linecap="round" stroke-linejoin="round" /><circle cx="33.2" cy="28.9" r="6.9" fill="#6b6b6b"/><path d="M32 25.2 V29.1 L35 31.6" stroke="#fff" stroke-width="1.7" stroke-linecap="round" stroke-linejoin="round" /></svg>
<svg class="r" style="left:3066px;top:501px;" width="50" height="45" viewBox="0 0 50 45" fill="none"><path d="M24.7 33.7 H17 Q14.2 33.7 14.2 31 V12.7 Q14.2 9.9 17 9.9 H35.2 Q38 9.9 38 12.7 V19.3 M14.2 17 H38 M21 8.1 V13.6 M31.1 8.1 V13.6" stroke="#6b6b6b" stroke-width="2.1" stroke-linecap="round" stroke-linejoin="round" /><circle cx="33.2" cy="28.9" r="6.9" fill="#6b6b6b"/><path d="M32 25.2 V29.1 L35 31.6" stroke="#fff" stroke-width="1.7" stroke-linecap="round" stroke-linejoin="round" /></svg>
<svg class="r" style="left:1711px;top:597px;" width="50" height="45" viewBox="0 0 50 45" fill="none"><path d="M24.7 33.7 H17 Q14.2 33.7 14.2 31 V12.7 Q14.2 9.9 17 9.9 H35.2 Q38 9.9 38 12.7 V19.3 M14.2 17 H38 M21 8.1 V13.6 M31.1 8.1 V13.6" stroke="#6b6b6b" stroke-width="2.1" stroke-linecap="round" stroke-linejoin="round" /><circle cx="33.2" cy="28.9" r="6.9" fill="#6b6b6b"/><path d="M32 25.2 V29.1 L35 31.6" stroke="#fff" stroke-width="1.7" stroke-linecap="round" stroke-linejoin="round" /></svg>
<svg class="r" style="left:1825px;top:595px;" width="40" height="45" viewBox="0 0 40 45" fill="none"><path d="M10 32 V12.5 Q10 11.5 11 11.5 H25 Q26 11.5 26 12.5 V32 L18 25.6 Z" stroke="#505050" stroke-width="2.1" stroke-linecap="round" stroke-linejoin="round" /></svg>
<svg class="r" style="left:1330px;top:718px;" width="40" height="44" viewBox="0 0 40 44" fill="none"><path d="M18.9 10.8 V24 M15.1 20 L18.9 23.8 L22.7 20 M9 22.7 V27.8 Q9 30.3 11.5 30.3 H26.3 Q28.8 30.3 28.8 27.8 V22.7" stroke="#5e9b98" stroke-width="2.2" stroke-linecap="round" stroke-linejoin="round" /></svg>
<div class="r" style="left:2946px;top:144px;width:236px;height:104px;border:8px solid #f04a4a;border-radius:13px;box-sizing:border-box"></div>
<div class="r" style="left:2960px;top:162px;width:208px;height:72px;background:#5c9a96;border-radius:8px"></div>
<div class="t" style="left:2993px;top:174.5px;font-size:28px;line-height:45px;color:#fff;font-weight:400;">创建交接单</div>
<svg class="r" style="left:2700px;top:120px;" width="240" height="100" viewBox="0 0 240 100" fill="none"><path d="M21.2 15.1 L19.2 24.2 L158 62.6 L156.8 73 Q155.5 80 162 80.5 L220 62.5 Q225.5 60 222 54 L175.5 19.5 Q169 15 166.5 22.5 L164 33.8 Z" fill="#f04a4a" /></svg>
<svg class="r" style="left:1110px;top:915px;" width="40" height="40" viewBox="0 0 40 40" fill="none"><path d="M16.6 10.5 L23.9 18 L16.6 25.5" stroke="#6b6b6b" stroke-width="2.4" stroke-linecap="round" stroke-linejoin="round" /></svg>
<svg class="r" style="left:3055px;top:925px;" width="40" height="45" viewBox="0 0 40 45" fill="none"><path d="M11.3 34.8 V12 Q11.3 11 12.3 11 H29.5 Q30.5 11 30.5 12 V34.8 L20.9 26.9 Z" stroke="#5e9b98" stroke-width="2.5" stroke-linecap="round" stroke-linejoin="round" /></svg>
<svg class="r" style="left:1110px;top:1051px;" width="40" height="40" viewBox="0 0 40 40" fill="none"><path d="M16.6 10.5 L23.9 18 L16.6 25.5" stroke="#6b6b6b" stroke-width="2.4" stroke-linecap="round" stroke-linejoin="round" /></svg>
<svg class="r" style="left:3055px;top:1061px;" width="40" height="45" viewBox="0 0 40 45" fill="none"><path d="M11.3 34.8 V12 Q11.3 11 12.3 11 H29.5 Q30.5 11 30.5 12 V34.8 L20.9 26.9 Z" stroke="#5e9b98" stroke-width="2.5" stroke-linecap="round" stroke-linejoin="round" /></svg>
<svg class="r" style="left:1110px;top:1187px;" width="40" height="40" viewBox="0 0 40 40" fill="none"><path d="M16.6 10.5 L23.9 18 L16.6 25.5" stroke="#6b6b6b" stroke-width="2.4" stroke-linecap="round" stroke-linejoin="round" /></svg>
<svg class="r" style="left:3055px;top:1197px;" width="40" height="45" viewBox="0 0 40 45" fill="none"><path d="M11.3 34.8 V12 Q11.3 11 12.3 11 H29.5 Q30.5 11 30.5 12 V34.8 L20.9 26.9 Z" stroke="#5e9b98" stroke-width="2.5" stroke-linecap="round" stroke-linejoin="round" /></svg>
<svg class="r" style="left:1110px;top:1323px;" width="40" height="40" viewBox="0 0 40 40" fill="none"><path d="M16.6 10.5 L23.9 18 L16.6 25.5" stroke="#6b6b6b" stroke-width="2.4" stroke-linecap="round" stroke-linejoin="round" /></svg>
<svg class="r" style="left:3055px;top:1333px;" width="40" height="45" viewBox="0 0 40 45" fill="none"><path d="M11.3 34.8 V12 Q11.3 11 12.3 11 H29.5 Q30.5 11 30.5 12 V34.8 L20.9 26.9 Z" stroke="#5e9b98" stroke-width="2.5" stroke-linecap="round" stroke-linejoin="round" /></svg>
<svg class="r" style="left:1110px;top:1459px;" width="40" height="40" viewBox="0 0 40 40" fill="none"><path d="M16.6 10.5 L23.9 18 L16.6 25.5" stroke="#6b6b6b" stroke-width="2.4" stroke-linecap="round" stroke-linejoin="round" /></svg>
<svg class="r" style="left:3055px;top:1469px;" width="40" height="45" viewBox="0 0 40 45" fill="none"><path d="M11.3 34.8 V12 Q11.3 11 12.3 11 H29.5 Q30.5 11 30.5 12 V34.8 L20.9 26.9 Z" stroke="#5e9b98" stroke-width="2.5" stroke-linecap="round" stroke-linejoin="round" /></svg>
<svg class="r" style="left:1110px;top:1595px;" width="40" height="40" viewBox="0 0 40 40" fill="none"><path d="M16.6 10.5 L23.9 18 L16.6 25.5" stroke="#6b6b6b" stroke-width="2.4" stroke-linecap="round" stroke-linejoin="round" /></svg>
<svg class="r" style="left:3055px;top:1605px;" width="40" height="45" viewBox="0 0 40 45" fill="none"><path d="M11.3 34.8 V12 Q11.3 11 12.3 11 H29.5 Q30.5 11 30.5 12 V34.8 L20.9 26.9 Z" stroke="#5e9b98" stroke-width="2.5" stroke-linecap="round" stroke-linejoin="round" /></svg>
<svg class="r" style="left:1110px;top:1731px;" width="40" height="40" viewBox="0 0 40 40" fill="none"><path d="M16.6 10.5 L23.9 18 L16.6 25.5" stroke="#6b6b6b" stroke-width="2.4" stroke-linecap="round" stroke-linejoin="round" /></svg>
<svg class="r" style="left:3055px;top:1741px;" width="40" height="45" viewBox="0 0 40 45" fill="none"><path d="M11.3 34.8 V12 Q11.3 11 12.3 11 H29.5 Q30.5 11 30.5 12 V34.8 L20.9 26.9 Z" stroke="#5e9b98" stroke-width="2.5" stroke-linecap="round" stroke-linejoin="round" /></svg>
<svg class="r" style="left:1535.5px;top:945px;" width="45" height="40" viewBox="0 0 45 40" fill="none"><path d="M20.4 17.5 V12.6 Q20.4 10.6 22.4 10.6 H31.5 Q33.5 10.6 33.5 12.6 V22.1 Q33.5 24.1 31.5 24.1 H26.6" stroke="#6b6b6b" stroke-width="2.2" stroke-linecap="round" stroke-linejoin="round" /><rect x="12.6" y="17.5" width="14" height="14.2" rx="2.3" stroke="#6b6b6b" stroke-width="2.2"/></svg>
<svg class="r" style="left:1535.5px;top:1081px;" width="45" height="40" viewBox="0 0 45 40" fill="none"><path d="M20.4 17.5 V12.6 Q20.4 10.6 22.4 10.6 H31.5 Q33.5 10.6 33.5 12.6 V22.1 Q33.5 24.1 31.5 24.1 H26.6" stroke="#6b6b6b" stroke-width="2.2" stroke-linecap="round" stroke-linejoin="round" /><rect x="12.6" y="17.5" width="14" height="14.2" rx="2.3" stroke="#6b6b6b" stroke-width="2.2"/></svg>
<svg class="r" style="left:1552.5px;top:1217.5px;" width="45" height="40" viewBox="0 0 45 40" fill="none"><path d="M20.4 17.5 V12.6 Q20.4 10.6 22.4 10.6 H31.5 Q33.5 10.6 33.5 12.6 V22.1 Q33.5 24.1 31.5 24.1 H26.6" stroke="#6b6b6b" stroke-width="2.2" stroke-linecap="round" stroke-linejoin="round" /><rect x="12.6" y="17.5" width="14" height="14.2" rx="2.3" stroke="#6b6b6b" stroke-width="2.2"/></svg>
<svg class="r" style="left:1548.5px;top:1353.5px;" width="45" height="40" viewBox="0 0 45 40" fill="none"><path d="M20.4 17.5 V12.6 Q20.4 10.6 22.4 10.6 H31.5 Q33.5 10.6 33.5 12.6 V22.1 Q33.5 24.1 31.5 24.1 H26.6" stroke="#6b6b6b" stroke-width="2.2" stroke-linecap="round" stroke-linejoin="round" /><rect x="12.6" y="17.5" width="14" height="14.2" rx="2.3" stroke="#6b6b6b" stroke-width="2.2"/></svg>
<svg class="r" style="left:1550.5px;top:1489.5px;" width="45" height="40" viewBox="0 0 45 40" fill="none"><path d="M20.4 17.5 V12.6 Q20.4 10.6 22.4 10.6 H31.5 Q33.5 10.6 33.5 12.6 V22.1 Q33.5 24.1 31.5 24.1 H26.6" stroke="#6b6b6b" stroke-width="2.2" stroke-linecap="round" stroke-linejoin="round" /><rect x="12.6" y="17.5" width="14" height="14.2" rx="2.3" stroke="#6b6b6b" stroke-width="2.2"/></svg>
<svg class="r" style="left:1553.5px;top:1625.5px;" width="45" height="40" viewBox="0 0 45 40" fill="none"><path d="M20.4 17.5 V12.6 Q20.4 10.6 22.4 10.6 H31.5 Q33.5 10.6 33.5 12.6 V22.1 Q33.5 24.1 31.5 24.1 H26.6" stroke="#6b6b6b" stroke-width="2.2" stroke-linecap="round" stroke-linejoin="round" /><rect x="12.6" y="17.5" width="14" height="14.2" rx="2.3" stroke="#6b6b6b" stroke-width="2.2"/></svg>
<svg class="r" style="left:1534.5px;top:1761.5px;" width="45" height="40" viewBox="0 0 45 40" fill="none"><path d="M20.4 17.5 V12.6 Q20.4 10.6 22.4 10.6 H31.5 Q33.5 10.6 33.5 12.6 V22.1 Q33.5 24.1 31.5 24.1 H26.6" stroke="#6b6b6b" stroke-width="2.2" stroke-linecap="round" stroke-linejoin="round" /><rect x="12.6" y="17.5" width="14" height="14.2" rx="2.3" stroke="#6b6b6b" stroke-width="2.2"/></svg>
<svg class="r" style="left:3780px;top:540px;" width="46" height="72" viewBox="0 0 46 72" fill="none"><defs><linearGradient id="bg1" x1="0" y1="0" x2="0" y2="1"><stop offset="0" stop-color="#a3c6fb"/><stop offset="0.5" stop-color="#93b9f2"/><stop offset="0.5" stop-color="#739ddb"/><stop offset="1" stop-color="#9dbfee"/></linearGradient></defs><circle cx="36" cy="36" r="31" fill="url(#bg1)"/><path d="M29.5 29.5 H42.0 V42.0 H29.5 Z M29.5 29.5 V24.0 A5.5 5.5 0 1 0 24.0 29.5 H29.5 M42.0 29.5 V24.0 A5.5 5.5 0 1 1 47.5 29.5 H42.0 M29.5 42.0 V47.5 A5.5 5.5 0 1 1 24.0 42.0 H29.5 M42.0 42.0 V47.5 A5.5 5.5 0 1 0 47.5 42.0 H42.0" stroke="#fff" stroke-width="4.4" stroke-linecap="round" stroke-linejoin="round" /></svg>
</body></html>
